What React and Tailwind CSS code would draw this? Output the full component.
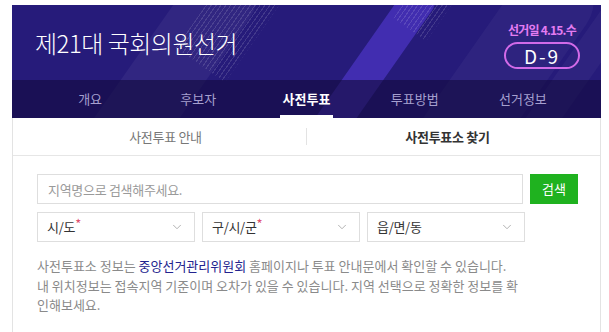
import { ChevronDown } from "lucide-react"

const font = { fontFamily: '"Noto Sans CJK KR", "Noto Sans", sans-serif' }

const navItems = ["개요", "후보자", "사전투표", "투표방법", "선거정보"]

const Select = ({ label, required }) => (
    <div className="flex h-[30px] flex-1 items-center justify-between border border-[#dedede] bg-white pl-[9px] pr-[10px]">
        <span className="text-[13px] tracking-[-0.3px] text-[#333]">
            {label}
            {required && <span className="relative top-[-3px] text-[#e0506e]">*</span>}
        </span>
        <ChevronDown size={14} strokeWidth={1.3} className="text-[#9a9a9a]" />
    </div>
)

const App = () => {
    return (
        <div style={font} className="h-[332px] w-[609px] overflow-hidden bg-white pl-3 pr-2 pt-[5px]">
            {/* banner */}
            <div className="relative overflow-hidden bg-[#261b7a]">
                <div className="pointer-events-none absolute inset-0">
                    <div className="absolute left-[120px] top-[-60px] h-[260px] w-[70px] rotate-[35deg] rounded-[35px] bg-white/[0.05]" />
                    <div className="absolute left-[190px] top-[-40px] h-[110px] w-[60px] rotate-[35deg] bg-[repeating-linear-gradient(90deg,rgba(255,255,255,0.13)_0_1px,transparent_1px_4px)]" />
                    <div className="absolute left-[330px] top-[-40px] h-[240px] w-[34px] rotate-[35deg] rounded-[17px] bg-[#5b3fe6]/50" />
                    <div className="absolute left-[395px] top-[-30px] h-[60px] w-[40px] rotate-[35deg] bg-[repeating-linear-gradient(90deg,rgba(255,255,255,0.13)_0_1px,transparent_1px_4px)]" />
                    <div className="absolute left-[450px] top-[-60px] h-[260px] w-[80px] rotate-[35deg] rounded-[40px] bg-white/[0.04]" />
                    <div className="absolute left-[540px] top-[-40px] h-[240px] w-[30px] rotate-[35deg] bg-white/[0.04]" />
                </div>

                <div className="relative flex h-[75px] items-center justify-between pl-[23px] pr-[21px]">
                    <h1 className="text-[24px] font-light tracking-[-0.5px] text-white">제21대 국회의원선거</h1>
                    <div className="flex flex-col items-center pt-[4px]">
                        <span className="text-[12px] font-bold tracking-[-0.8px] text-[#e47cf2]">선거일 4.15.수</span>
                        <div className="mt-[3px] flex h-[27px] w-[76px] items-center justify-center rounded-full border-2 border-[#d26ae8] text-[19px] leading-none tracking-[2px] text-white">
                            D-9
                        </div>
                    </div>
                </div>

                <nav className="relative grid h-[38px] grid-cols-5 bg-[#120a3c]/60 px-6">
                    {navItems.map((item) => {
                        const active = item === "사전투표"
                        return (
                            <div key={item} className="relative flex items-center justify-center">
                                <span className={active ? "text-[13px] font-bold text-white" : "text-[13px] text-[#a6a0cf]"}>{item}</span>
                                {active && <span className="absolute bottom-0 h-[3px] w-[53px] bg-white" />}
                            </div>
                        )
                    })}
                </nav>
            </div>

            {/* card */}
            <div className="h-[300px] border-x border-[#e3e3e3]">
                <div className="flex h-[38px] items-center border-b border-[#e6e6e6] px-3">
                    <div className="flex flex-1 justify-center text-[13px] tracking-[-0.3px] text-[#777]">사전투표 안내</div>
                    <div className="h-[17px] w-px bg-[#e3e3e3]" />
                    <div className="flex flex-1 justify-center text-[13px] font-bold tracking-[-0.3px] text-[#333]">사전투표소 찾기</div>
                </div>

                <div className="pl-6 pt-[18px]">
                    <div className="flex gap-[7px]">
                        <input
                            type="text"
                            placeholder="지역명으로 검색해주세요."
                            className="h-[30px] w-[486px] border border-[#dedede] px-[10px] text-[13px] tracking-[-0.3px] text-[#333] outline-none placeholder:text-[#9a9a9a]"
                        />
                        <button className="h-[30px] w-[48px] bg-[#1fb21f] text-[13px] text-white">검색</button>
                    </div>

                    <div className="mt-2 flex w-[488px] gap-[7px]">
                        <Select label="시/도" required />
                        <Select label="구/시/군" required />
                        <Select label="읍/면/동" />
                    </div>

                    <p className="mt-[14px] whitespace-nowrap text-[13px] leading-[19.5px] tracking-[0px] text-[#8a8a8a]">
                        사전투표소 정보는 <span className="text-[#23238e]">중앙선거관리위원회</span> 홈페이지나 투표 안내문에서 확인할 수 있습니다.
                        <br />
                        내 위치정보는 접속지역 기준이며 오차가 있을 수 있습니다. 지역 선택으로 정확한 정보를 확
                        <br />
                        인해보세요.
                    </p>
                </div>
            </div>
        </div>
    )
}

export default App
